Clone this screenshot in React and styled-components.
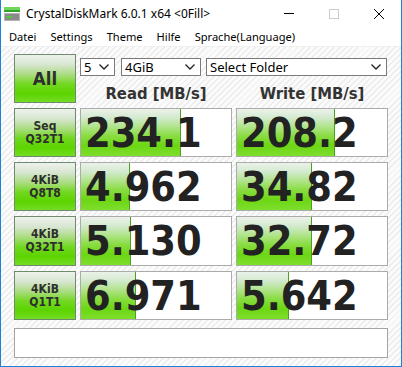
import React from 'react';
import styled, { createGlobalStyle } from 'styled-components';

const Global = createGlobalStyle`
  html, body { margin: 0; padding: 0; background: #fff; }
  body { width: 402px; height: 367px; overflow: hidden; }
`;

const Window = styled.div`
  box-sizing: border-box;
  width: 402px;
  height: 367px;
  border: 1px solid #1883d7;
  border-top: none;
  display: flex;
  flex-direction: column;
  background: #fff;
  font-family: "Noto Sans", "Open Sans", sans-serif;
  color: #000;
`;

const TitleBar = styled.div`
  height: 27px;
  display: flex;
  align-items: center;
  padding-left: 3px;
`;

const TitleText = styled.span`
  margin-left: 5px;
  font-size: 12px;
  flex: 1;
  white-space: nowrap;
`;

const CaptionBtn = styled.div`
  width: 45px;
  height: 27px;
  display: flex;
  align-items: center;
  justify-content: center;
`;

const MenuBar = styled.div`
  height: 19px;
  display: flex;
  align-items: center;
  padding-left: 1px;
  border-bottom: 1px solid #f0f0f0;
`;

const MenuItem = styled.span`
  padding: 0 7px;
  font-size: 11.1px;
  white-space: nowrap;
`;

const Client = styled.div`
  flex: 1;
  background: repeating-linear-gradient(135deg, #fbfbfb 0px, #fbfbfb 3px, #ececec 3px, #ececec 4.3px);
  padding: 7px 0 0 13px;
`;

const Board = styled.div`
  display: grid;
  grid-template-columns: 62px 152px 152px;
  grid-template-rows: 49px 49px 49px 50px 49px;
  column-gap: 4px;
  row-gap: 5px;
`;

const condFont = `"DejaVu Sans Condensed", "DejaVu Sans", sans-serif`;

const GreenButton = styled.div`
  box-sizing: border-box;
  border: 1px solid #708a70;
  background: linear-gradient(to bottom, #eef2ec 0%, #d8e6d2 20%, #aadc80 42%, #72d820 62%, #5cd400 82%, #74dc24 100%);
  display: flex;
  align-items: center;
  justify-content: center;
  text-align: center;
  font-family: ${condFont};
  font-weight: bold;
  font-size: ${p => (p.$big ? '18.5px' : '12px')};
  line-height: 13px;
  color: #2e2e2e;
`;

const TopArea = styled.div`
  grid-column: 2 / 4;
  display: flex;
  flex-direction: column;
`;

const SelectRow = styled.div`
  display: flex;
  margin-top: 4px;
  height: 18px;
`;

const Select = styled.div`
  box-sizing: border-box;
  width: ${p => p.$w}px;
  margin-right: ${p => p.$mr || 0}px;
  height: 18px;
  border: 1px solid #7a7a7a;
  background: #fff;
  display: flex;
  align-items: center;
  justify-content: space-between;
  padding: 0 5px 0 3px;
  font-size: 13px;
  line-height: 16px;
`;

const HeaderRow = styled.div`
  display: grid;
  grid-template-columns: 152px 152px;
  column-gap: 4px;
  margin-top: 8px;
`;

const Header = styled.div`
  text-align: center;
  font-family: ${condFont};
  font-weight: bold;
  font-size: 16.5px;
  line-height: 20px;
  color: #333;
`;

const ValueBox = styled.div`
  position: relative;
  box-sizing: border-box;
  border: 1px solid #ababab;
  background: #fff;
  overflow: hidden;
`;

const Fill = styled.div`
  position: absolute;
  left: 0;
  top: 0;
  bottom: 0;
  box-sizing: border-box;
  border-right: 1px solid #4aa020;
  background: linear-gradient(to bottom, #ecf2ea 0%, #d4ead0 18%, #b0e48a 38%, #88dc40 58%, #6cd614 78%, #7ede2c 100%);
`;

const Num = styled.div`
  position: relative;
  padding: 1px 0 0 4px;
  font-family: ${condFont};
  font-weight: bold;
  font-size: 41px;
  line-height: 46px;
  color: #222;
  white-space: nowrap;
`;

const Comment = styled.div`
  box-sizing: border-box;
  margin-top: 8px;
  width: 374px;
  height: 30px;
  border: 1px solid #a4a4a4;
  background: #fff;
`;

const Chevron = () => (
  <svg width="10" height="6" viewBox="0 0 10 6">
    <path d="M0.5 0.5 L5 5 L9.5 0.5" fill="none" stroke="#222" strokeWidth="1.3" />
  </svg>
);

const AppIcon = () => (
  <svg width="17" height="16" viewBox="0 0 17 16">
    <rect x="0" y="1" width="16" height="3" fill="#6fd85a" />
    <rect x="0" y="4" width="16" height="2" fill="#2fa52c" />
    <rect x="0" y="7" width="16" height="8" fill="#8a8a8a" />
    <rect x="0.5" y="7.5" width="15" height="7" fill="none" stroke="#b4b4b4" strokeWidth="1" />
    <rect x="2" y="10" width="6" height="2" fill="#56c83e" />
  </svg>
);

const rows = [
  { l1: 'Seq', l2: 'Q32T1', read: '234.1', rw: 100, write: '208.2', ww: 98 },
  { l1: '4KiB', l2: 'Q8T8', read: '4.962', rw: 49, write: '34.82', ww: 75 },
  { l1: '4KiB', l2: 'Q32T1', read: '5.130', rw: 50, write: '32.72', ww: 75 },
  { l1: '4KiB', l2: 'Q1T1', read: '6.971', rw: 55, write: '5.642', ww: 52 },
];

export default function App() {
  return (
    <>
      <Global />
      <Window>
        <TitleBar>
          <AppIcon />
          <TitleText>{'CrystalDiskMark 6.0.1 x64 <0Fill>'}</TitleText>
          <CaptionBtn>
            <svg width="10" height="10" viewBox="0 0 10 10">
              <rect x="0" y="4" width="10" height="1" fill="#000" />
            </svg>
          </CaptionBtn>
          <CaptionBtn>
            <svg width="10" height="10" viewBox="0 0 10 10">
              <rect x="0.5" y="0.5" width="9" height="9" fill="none" stroke="#ccc" strokeWidth="1" />
            </svg>
          </CaptionBtn>
          <CaptionBtn>
            <svg width="10" height="10" viewBox="0 0 10 10">
              <path d="M0 0 L10 10 M10 0 L0 10" stroke="#000" strokeWidth="1" />
            </svg>
          </CaptionBtn>
        </TitleBar>
        <MenuBar>
          <MenuItem>Datei</MenuItem>
          <MenuItem>Settings</MenuItem>
          <MenuItem>Theme</MenuItem>
          <MenuItem>Hilfe</MenuItem>
          <MenuItem>Sprache(Language)</MenuItem>
        </MenuBar>
        <Client>
          <Board>
            <GreenButton $big>All</GreenButton>
            <TopArea>
              <SelectRow>
                <Select $w={35} $mr={6}>5<Chevron /></Select>
                <Select $w={80} $mr={5}>4GiB<Chevron /></Select>
                <Select $w={181}>Select Folder<Chevron /></Select>
              </SelectRow>
              <HeaderRow>
                <Header>Read [MB/s]</Header>
                <Header>Write [MB/s]</Header>
              </HeaderRow>
            </TopArea>
            {rows.map((r, i) => (
              <React.Fragment key={i}>
                <GreenButton>{r.l1}<br />{r.l2}</GreenButton>
                <ValueBox>
                  <Fill style={{ width: r.rw + 'px' }} />
                  <Num>{r.read}</Num>
                </ValueBox>
                <ValueBox>
                  <Fill style={{ width: r.ww + 'px' }} />
                  <Num>{r.write}</Num>
                </ValueBox>
              </React.Fragment>
            ))}
          </Board>
          <Comment />
        </Client>
      </Window>
    </>
  );
}
